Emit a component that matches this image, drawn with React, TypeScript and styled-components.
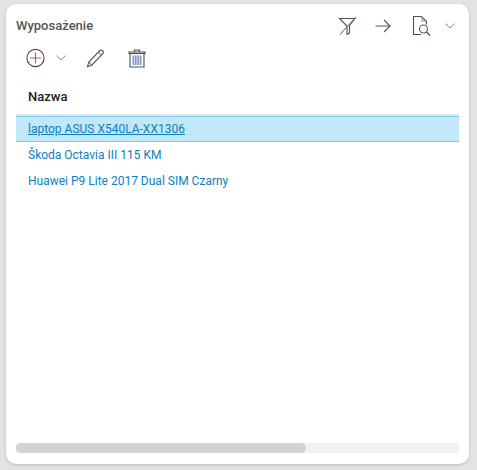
import React from "react";
import styled, { createGlobalStyle } from "styled-components";

const GlobalStyle = createGlobalStyle`
  html, body {
    margin: 0;
    padding: 0;
    background: #e3e3e3;
    font-family: Roboto, "Liberation Sans", sans-serif;
  }
`;

const Page = styled.div`
  width: 477px;
  height: 470px;
  padding: 4px 8px 6px 6px;
  box-sizing: border-box;
  overflow: hidden;
`;

const Card = styled.section`
  width: 463px;
  height: 460px;
  box-sizing: border-box;
  padding: 12px 10px 11px 10px;
  background: #fff;
  border-radius: 10px;
  box-shadow: 0 1px 3px rgba(0, 0, 0, 0.18);
  display: flex;
  flex-direction: column;
`;

const Header = styled.header`
  display: flex;
  align-items: center;
  justify-content: space-between;
  height: 20px;
`;

const Title = styled.h2`
  margin: 0 0 2px;
  font-size: 13px;
  font-weight: 500;
  color: #555;
`;

const Actions = styled.div`
  display: flex;
  align-items: center;
  margin-right: 3px;
`;

const IconButton = styled.button<{ $gap?: number }>`
  display: flex;
  align-items: center;
  justify-content: center;
  padding: 0;
  border: none;
  background: none;
  margin-left: ${(p) => p.$gap ?? 0}px;
`;

const Toolbar = styled.div`
  display: flex;
  align-items: center;
  height: 26px;
  margin-top: 9px;
  padding-left: 9px;
`;

const Table = styled.div`
  flex: 1;
  margin-top: 12px;
`;

const HeadCell = styled.div`
  height: 33px;
  box-sizing: border-box;
  padding: 6px 12px 0;
  font-size: 13px;
  font-weight: 500;
  color: #222;
  line-height: 16px;
  border-bottom: 2px solid #e6e6e6;
`;

const Row = styled.div<{ $selected?: boolean }>`
  height: 26px;
  box-sizing: border-box;
  padding: 0 12px;
  display: flex;
  align-items: center;
  font-size: 12px;
  color: #0b7fc0;
  text-decoration: ${(p) => (p.$selected ? "underline" : "none")};
  background: ${(p) => (p.$selected ? "#c1e8f9" : "transparent")};
  border-top: 1px solid ${(p) => (p.$selected ? "#7fcdee" : "transparent")};
  border-bottom: 1px solid ${(p) => (p.$selected ? "#7fcdee" : "transparent")};
`;

const ScrollTrack = styled.div`
  height: 10px;
  background: #f1f1f1;
`;

const ScrollThumb = styled.div`
  width: 290px;
  height: 100%;
  background: #d3d3d3;
  border-radius: 5px;
`;

const Chevron = () => (
  <svg width="12" height="8" viewBox="0 0 12 8" fill="none" stroke="#8a8f96" strokeWidth="1">
    <path d="M1.5 1.5 6 6l4.5-4.5" />
  </svg>
);

const FilterOff = () => (
  <svg width="20" height="20" viewBox="0 0 20 20" fill="none" stroke="#4d5157" strokeWidth="1.1">
    <path d="M1.5 2.5h15.5L11.5 9.5v7.5l-2.5 1.5v-8.5L1.5 2.5z" />
    <path d="M18 1 2 18.5" stroke="#5f7f9c" />
  </svg>
);

const ArrowRight = () => (
  <svg width="16" height="14" viewBox="0 0 16 14" fill="none" stroke="#555" strokeWidth="1.1">
    <path d="M0.5 7h14.5M9 1l6 6-6 6" />
  </svg>
);

const DocSearch = () => (
  <svg width="19" height="20" viewBox="0 0 19 20" fill="none" stroke="#4d4f52" strokeWidth="1.1">
    <path d="M9 18.5H1.5V0.5h8l5 5v3" />
    <path d="M10 0.5v4.5h4.5" stroke="#7d94a8" />
    <circle cx="11.5" cy="13" r="4" stroke="#3f5b75" />
    <path d="m14.5 16 3.5 3.5" stroke="#3f5b75" strokeWidth="1.5" />
  </svg>
);

const PlusCircle = () => (
  <svg width="20" height="20" viewBox="0 0 20 20" fill="none" stroke="#5a4048" strokeWidth="1.1">
    <circle cx="10.5" cy="10" r="8.6" />
    <path d="M10.5 4.5v11M5 10h11" stroke="#a8624f" />
  </svg>
);

const Pencil = () => (
  <svg width="18" height="19" viewBox="0 0 18 19" fill="none" stroke="#5a5a5a" strokeWidth="1.2">
    <path d="M1.5 17.5 2.8 13 13.8 1.5c1-.7 2.2-.5 3 .4.7.9.6 2 0 2.8L5.8 16.2z" />
    <path d="M2.8 13l3 3.2M12.3 3l3 3.2" stroke="#7a8a9a" />
  </svg>
);

const Trash = () => (
  <svg width="18" height="20" viewBox="0 0 18 20" fill="none" stroke="#45505c" strokeWidth="1.1">
    <path d="M1 4h16v1.5H1zM6.5 4V2h5v2" />
    <path d="M2 5.5V19h14V5.5" />
    <path d="M4.5 7.5h9V17h-9z" fill="#7f9ac0" stroke="none" />
    <path d="M6.5 7.5V17M9 7.5V17M11.5 7.5V17" stroke="#fff" strokeWidth="0.7" />
  </svg>
);

const rows = [
  "laptop ASUS X540LA-XX1306",
  "Škoda Octavia III 115 KM",
  "Huawei P9 Lite 2017 Dual SIM Czarny",
];

export default function App() {
  return (
    <Page>
      <GlobalStyle />
      <Card>
        <Header>
          <Title>Wyposażenie</Title>
          <Actions>
            <IconButton><FilterOff /></IconButton>
            <IconButton $gap={17}><ArrowRight /></IconButton>
            <IconButton $gap={21}><DocSearch /></IconButton>
            <IconButton $gap={13}><Chevron /></IconButton>
          </Actions>
        </Header>
        <Toolbar>
          <IconButton><PlusCircle /></IconButton>
          <IconButton $gap={10}><Chevron /></IconButton>
          <IconButton $gap={19}><Pencil /></IconButton>
          <IconButton $gap={24}><Trash /></IconButton>
        </Toolbar>
        <Table>
          <HeadCell>Nazwa</HeadCell>
          {rows.map((name, i) => (
            <Row key={name} $selected={i === 0}>{name}</Row>
          ))}
        </Table>
        <ScrollTrack>
          <ScrollThumb />
        </ScrollTrack>
      </Card>
    </Page>
  );
}
